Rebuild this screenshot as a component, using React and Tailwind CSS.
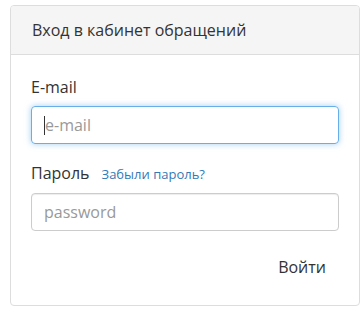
import React from "react";

export default function App() {
  return (
    <div className="w-[364px] h-[314px] bg-white pt-[5px] pl-[10px]" style={{ fontFamily: '"Open Sans", sans-serif' }}>
      <div className="w-[350px] h-[301px] border border-[#dddddd] rounded-[4px] flex flex-col overflow-hidden">
        <div className="h-[49px] shrink-0 bg-[#f5f5f5] border-b border-[#dddddd] px-[21px] flex items-center text-[16px] text-[#333333]">
          Вход в кабинет обращений
        </div>
        <div className="flex flex-col px-[20px] pt-[21px]">
          <label className="text-[16px] leading-[22px] text-[#333333]">E-mail</label>
          <div className="relative mt-[8px] w-[308px] h-[38px]">
            <input
              placeholder="e-mail"
              className="w-[308px] h-[38px] px-[13px] text-[16px] text-[#555555] placeholder:text-[#999999] border border-[#66afe9] rounded-[4px] outline-none shadow-[0_0_6px_rgba(102,175,233,0.6)]"
              style={{ fontFamily: '"Open Sans", sans-serif' }}
            />
            <span className="absolute left-[13px] top-[10px] w-px h-[19px] bg-[#333333]" />
          </div>
          <div className="mt-[18px] flex items-baseline gap-[12px]">
            <span className="text-[16px] leading-[22px] text-[#333333]">Пароль</span>
            <span className="text-[13px] text-[#337ab7]">Забыли пароль?</span>
          </div>
          <input
            placeholder="password"
            className="mt-[8px] w-[308px] h-[38px] px-[12px] text-[16px] text-[#555555] placeholder:text-[#999999] border border-[#cccccc] rounded-[4px] outline-none shadow-[inset_0_1px_1px_rgba(0,0,0,0.075)]"
            style={{ fontFamily: '"Open Sans", sans-serif' }}
          />
          <div className="mt-[19px] flex justify-end">
            <button className="h-[34px] px-[13px] text-[16px] text-[#333333]">Войти</button>
          </div>
        </div>
      </div>
    </div>
  );
}
